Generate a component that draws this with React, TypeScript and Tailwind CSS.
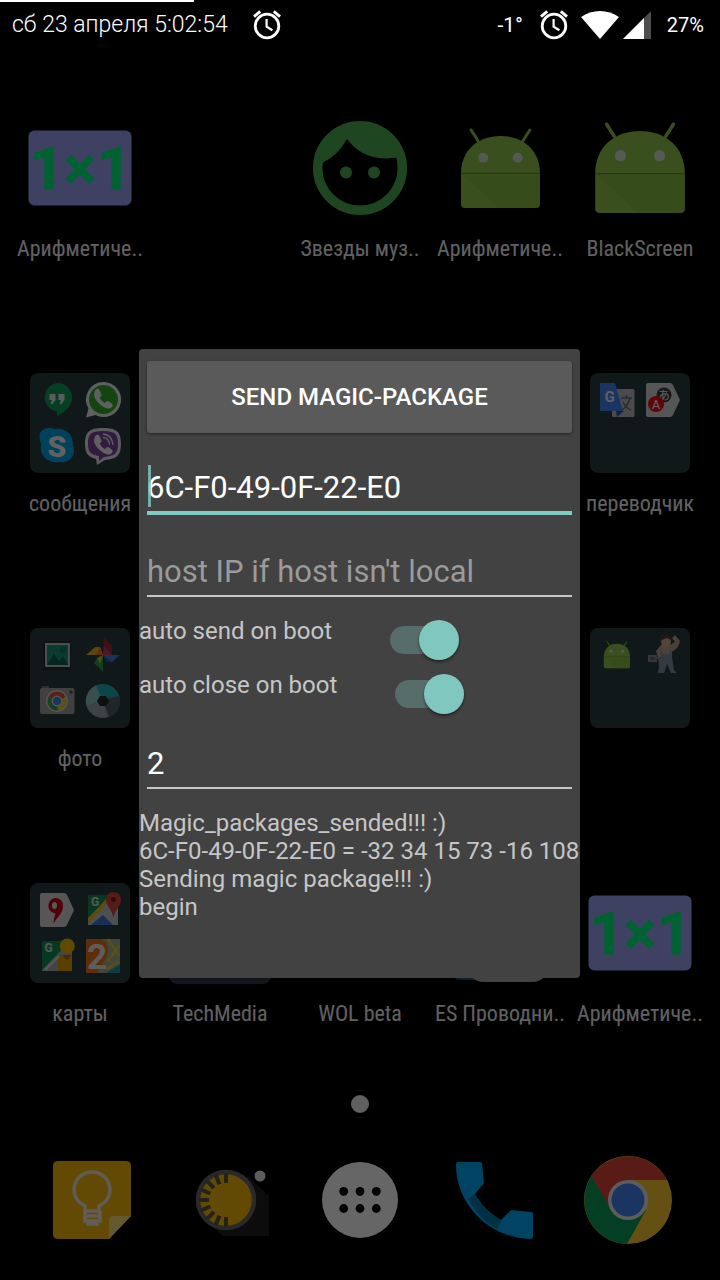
import type { ReactNode } from 'react';

const labelFont = "font-['Roboto_Condensed','Roboto',sans-serif]";

function AlarmIcon() {
  return (
    <svg viewBox="0 0 30 30" className="size-[30px] shrink-0" fill="none" stroke="#fff" aria-hidden="true">
      <circle cx="15" cy="16" r="11.8" strokeWidth="2.8" />
      <path d="M14.6 9v7.6l5.8 3.6" strokeWidth="2.2" />
      <path d="M2 6.6 8.2 1.4M28 6.6 21.8 1.4" strokeWidth="3" />
    </svg>
  );
}

function StatusBar() {
  return (
    <header className="relative z-20 flex h-[50px] items-center justify-between pr-4 pl-3 text-white">
      <div className="absolute top-0 left-0 h-[2px] w-[27%] bg-white" />
      <div className="flex items-center gap-6">
        <time className="text-[23px] leading-[30px] font-light">сб 23 апреля 5:02:54</time>
        <AlarmIcon />
      </div>
      <div className="flex items-center text-[21px] leading-[30px]">
        <span className="mr-4">-1°</span>
        <AlarmIcon />
        <svg viewBox="0 0 38 28" className="ml-3 h-7 w-[38px]" aria-hidden="true">
          <path d="M0 6C11-2 27-2 38 6L19 28Z" fill="#fff" />
        </svg>
        <svg viewBox="0 0 28 28" className="ml-1 size-7" aria-hidden="true">
          <path d="M28 0v28H0Z" fill="#4d4d4d" />
          <path d="M21 7v21H0Z" fill="#fff" />
        </svg>
        <span className="ml-4 text-[20px]">27%</span>
      </div>
    </header>
  );
}

function TimesTableIcon() {
  return (
    <svg viewBox="0 0 104 76" className="h-[76px] w-[104px]" aria-hidden="true">
      <rect x=".5" y=".5" width="103" height="75" rx="6" fill="#9ca4f5" />
      <g textAnchor="middle" fontFamily="Roboto, sans-serif" fontWeight="700" fontSize="60" fill="#00f580" stroke="#00f580" strokeWidth="1">
        <text x="19" y="58.500">1</text>
        <text x="52" y="58.500">×</text>
        <text x="86" y="58.500">1</text>
      </g>
    </svg>
  );
}

function FaceIcon() {
  return (
    <svg viewBox="0 0 94 94" className="size-[94px]" aria-hidden="true">
      <circle cx="47" cy="47" r="42.3" fill="none" stroke="#4cb050" strokeWidth="9.4" />
      <path d="M6 43C18 39 28 29 34 18c10 14 27 23 53 18L84 22 66 6 47 1 25 6 9 22Z" fill="#4cb050" />
      <circle cx="33" cy="51.5" r="6" fill="#4cb050" />
      <circle cx="61" cy="51.5" r="6" fill="#4cb050" />
    </svg>
  );
}

function AndroidShape() {
  return (
    <>
      <path d="m11 2 8 13M69 2l-8 13" stroke="#8bc34a" strokeWidth="3" strokeLinecap="round" />
      <path d="M1 46C1 22 18 8 40 8s39 14 39 38v31q0 4-4 4H5q-4 0-4-4Z" fill="#8ec549" />
      <path d="M3 47h76v30q0 4-4 4H38Z" fill="#82b742" opacity=".6" />
      <path d="M1 46h78" stroke="#65902f" strokeWidth="1.2" />
      <circle cx="23" cy="30" r="5" fill="#d8dbd5" />
      <circle cx="57" cy="30" r="5" fill="#d8dbd5" />
    </>
  );
}

function AndroidIcon({ large = false }: { large?: boolean }) {
  return (
    <svg viewBox="0 0 80 82" className={large ? 'h-[92px] w-[92px]' : 'h-[81px] w-[81px]'} preserveAspectRatio="none" aria-hidden="true">
      <AndroidShape />
    </svg>
  );
}

function Folder({ children }: { children: ReactNode }) {
  return (
    <svg viewBox="0 0 100 100" className="size-[100px] rounded-lg bg-[#2c3d42]" aria-hidden="true">
      {children}
    </svg>
  );
}

const handset = 'M-7-8.500q3-3.500 5 .5l1.500 3.500q.5 1.500-2 3Q-.5 2.500 3 4.200 5 1 7 2.500l3 2.200q2 2-1.500 4.500Q4 11-3 4.500T-7-8.500Z';

function MessagesArt() {
  return (
    <Folder>
      <path d="M27 10a15 14.500 0 0 1 15 14.500C42 34 33 40 27 43v-4.500A15 14.500 0 0 1 27 10Z" fill="#11a05b" />
      <path d="M19.500 21h6v6l-3 4h-2l1.500-4h-2.500ZM28.500 21h6v6l-3 4h-2l1.500-4h-2.500Z" fill="#e5e5e5" />
      <path d="M73.500 9a17.500 17.500 0 1 1-8 33L56 44.500l2.500-9A17.500 17.500 0 0 1 73.500 9Z" fill="#eee" />
      <circle cx="73.500" cy="26.500" r="14.500" fill="#32ac2b" />
      <path d={handset} transform="translate(72 26)" fill="#eee" />
      <path d="M10 60c4-6 11-6 14-4 12-2 20 6 19 17 4 8-3 18-14 16-11 2-20-7-18-18-1-3-2-7-1-11Z" fill="#00a5e5" />
      <text x="27" y="84" textAnchor="middle" fontFamily="Roboto, sans-serif" fontWeight="900" fontSize="30" fill="#f2f2f2">S</text>
      <path d="M73 55c14 0 18 4 18 16s-5 15-16 16l-8 5-1-6c-8-2-11-6-11-15 0-12 4-16 18-16Z" fill="#e5e0ea" />
      <path d="M73 58c12 0 15 3 15 13s-4 12-14 13l-5 4v-5c-8-1-11-4-11-12 0-10 3-13 15-13Z" fill="#7b479f" />
      <path d={handset} transform="translate(72 72)" fill="#f2f2f2" />
      <path d="M73 61q9 1 10 11M73 64.500q6 .5 6.500 7" fill="none" stroke="#f2f2f2" strokeWidth="1.300" />
    </Folder>
  );
}

function TranslateArt() {
  return (
    <Folder>
      <rect x="22" y="16" width="22.500" height="28" rx="1.500" fill="#bbb" />
      <path d="M31 25h11M36.500 22v3M40 25q-2 8-8 12M33 29q3 6 8 8" fill="none" stroke="#65717a" strokeWidth="1.500" />
      <path d="M11 10h14l8 28H11q-1 0-1-1V11q0-1 1-1Z" fill="#4285f4" />
      <path d="M26 38h8l-7 6Z" fill="#3052a8" />
      <text x="19.500" y="29" textAnchor="middle" fontFamily="Roboto, sans-serif" fontWeight="700" fontSize="15" fill="#eee">G</text>
      <path d="M58 10h22q2 0 3 2l7 15-7 15q-1 2-3 2H58q-2 0-2-2V12q0-2 2-2Z" fill="#d8d8d8" />
      <circle cx="74" cy="22" r="7.500" fill="#3a3a3a" />
      <text x="74" y="27" textAnchor="middle" fontFamily="'Noto Sans CJK JP', sans-serif" fontSize="12" fill="#eee">あ</text>
      <circle cx="66" cy="31" r="8" fill="#f01010" />
      <text x="66" y="35.500" textAnchor="middle" fontFamily="Roboto, sans-serif" fontSize="12.500" fill="#fff">A</text>
    </Folder>
  );
}

function PhotosArt() {
  return (
    <Folder>
      <rect x="13" y="13" width="28" height="29" fill="#232d2d" />
      <rect x="16" y="16" width="23" height="22" fill="#1c9180" stroke="#c9d0cf" strokeWidth="1.800" />
      <circle cx="33" cy="22" r="3" fill="#147568" />
      <path d="m17 37 7-11 5 7 4-5 5 9Z" fill="#115a50" />
      <path d="m73 27 1-17 8 8v9Z" fill="#a42b38" />
      <path d="M73 27h17l-8 7h-5Z" fill="#4a79dd" />
      <path d="M73 27v17l-9-9 3-5Z" fill="#2d9a4b" />
      <path d="M73 27H56l9-8h5Z" fill="#e3ae23" />
      <path d="m73 27 1-9 8 9Z" fill="#c93a5c" />
      <path d="m73 27 4 7h5Z" fill="#3158b5" />
      <path d="m73 27-6 3 3 6Z" fill="#b3c83c" />
      <path d="m73 27-3-8-4 8Z" fill="#e5762d" />
      <rect x="12" y="58" width="7" height="4" fill="#777" />
      <rect x="10" y="60" width="34.500" height="26" rx="2" fill="#a4a0a0" />
      <circle cx="41" cy="64" r="1.800" fill="#555" />
      <circle cx="27" cy="73" r="11" fill="#d0d0d0" />
      <path d="M27 73 18.500 69A9.500 9.500 0 0 1 35.500 69Z" fill="#e34c3e" />
      <path d="M27 73 35.500 69A9.500 9.500 0 0 1 28 82.500Z" fill="#f4c22a" />
      <path d="M27 73 28 82.500A9.500 9.500 0 0 1 18.500 69Z" fill="#3ba45a" />
      <circle cx="27" cy="73" r="4.800" fill="#4a87e8" stroke="#ddd" strokeWidth="1.200" />
      <circle cx="73" cy="73" r="17" fill="#607d80" />
      <path d="M73 73 62 60A17 17 0 0 1 89 68L77 69Z" fill="#16b5ba" />
      <path d="M73 73 56.500 78A17 17 0 0 1 66 57.500Z" fill="#8cc2c6" />
      <path d="M73 73 78 89A17 17 0 0 1 56.500 78Z" fill="#9aa5a7" />
      <path d="M73 73 89.500 68A17 17 0 0 1 80 88.500Z" fill="#4e5f64" />
      <path d="m70 68 6 0 3 5-3 5h-6l-3-5Z" fill="#20282b" />
    </Folder>
  );
}

function ToolsArt() {
  return (
    <Folder>
      <g transform="translate(13.500 13) scale(.335)">
        <AndroidShape />
      </g>
      <path d="M68 29h14l2 13 3 3h-6l-4-9-3 9h-6l1-6Z" fill="#8195a3" />
      <path d="m66 23 5-6h9l5-3-3-4 3-3 5 6-2 6-6 5v5H68Z" fill="#bba28e" />
      <circle cx="76" cy="14" r="5" fill="#d1a98e" />
      <path d="M69 12q1-6 7-5 5 0 5 5l-4-2-5 2Z" fill="#5e3e32" />
      <path d="m70 20 1 10h11l-1-10-2 6h-6Z" fill="#8195a3" />
      <path d="M59 28h7v5h-7ZM66 30h12" stroke="#8b8b94" strokeWidth="2" fill="#6a6670" />
    </Folder>
  );
}

function MapsArt() {
  return (
    <Folder>
      <path d="M12 10h22q2 0 3 2l7 15-7 15q-1 2-3 2H12q-2 0-2-2V12q0-2 2-2Z" fill="#d8d8d8" />
      <path d="M25 15a7.500 7.500 0 0 1 8 8.500C32.500 31 27 34 23.500 41c0-4 1-7 2-10.500A7.800 7.800 0 0 1 25 15Z" fill="#c90013" />
      <ellipse cx="24.500" cy="22.500" rx="2.500" ry="3.500" fill="#ddd" />
      <rect x="58" y="12" width="30" height="30" rx="1.500" fill="#138f53" />
      <path d="m58 38 25-26h5v30H58Z" fill="#c2c5c7" />
      <path d="m58 35 22-23h5L58 41Z" fill="#e6bd25" />
      <path d="m61 42 12-10 10 10Z" fill="#3f75d8" />
      <text x="65" y="23" textAnchor="middle" fontFamily="Roboto, sans-serif" fontWeight="700" fontSize="12" fill="#ddd">G</text>
      <path d="M83.500 9a7.500 7.500 0 0 1 7.500 8c0 6-6 9-7.500 18C82 26 76 23 76 17a7.500 7.500 0 0 1 7.500-8Z" fill="#d7483b" />
      <circle cx="83.500" cy="16.500" r="2.500" fill="#701d1b" />
      <rect x="12" y="58" width="30" height="30" rx="1.500" fill="#138f53" />
      <path d="m12 87 28-29h2v30H12Z" fill="#a9aba9" />
      <path d="M28 72h14v16H28Z" fill="#e0a000" />
      <path d="m32 72 5 6 5-6Z" fill="#c26a16" />
      <path d="m15 87 14-14" stroke="#ddd" strokeWidth="2" />
      <circle cx="37.300" cy="63" r="7.500" fill="#edb900" />
      <text x="18.500" y="69" textAnchor="middle" fontFamily="Roboto, sans-serif" fontWeight="700" fontSize="12" fill="#ddd">G</text>
      <rect x="56" y="56" width="34" height="34" fill="#abb08e" />
      <path d="M56 56h16q8 5 5 15-2 8-10 19H56Z" fill="#ea7414" />
      <path d="m78 56 11 17M89 63 78 78M76 86l13-7" stroke="#d6c94c" strokeWidth="2.500" />
      <path d="M76 90 90 81v9Z" fill="#1a9ba5" />
      <text x="67" y="86" textAnchor="middle" fontFamily="Roboto, sans-serif" fontWeight="700" fontSize="35" fill="#e9e9e9">2</text>
    </Folder>
  );
}

function ExplorerIcon() {
  return (
    <svg viewBox="0 0 104 98" className="h-[98px] w-[104px]" aria-hidden="true">
      <rect x="4" y="14" width="82" height="82" rx="8" fill="#1c4a80" />
      <rect x="18" y="22" width="84" height="76" rx="18" fill="#a8a8a8" />
    </svg>
  );
}

function WolIcon() {
  return (
    <svg viewBox="0 0 80 80" className="size-20" aria-hidden="true">
      <AndroidShape />
    </svg>
  );
}

type App = { name?: string; art?: ReactNode };

const apps: App[] = [
  { name: 'Арифметиче..', art: <TimesTableIcon /> },
  {},
  { name: 'Звезды муз..', art: <FaceIcon /> },
  { name: 'Арифметиче..', art: <AndroidIcon /> },
  { name: 'BlackScreen', art: <AndroidIcon large /> },
  { name: 'сообщения', art: <MessagesArt /> },
  {},
  {},
  {},
  { name: 'переводчик', art: <TranslateArt /> },
  { name: 'фото', art: <PhotosArt /> },
  {},
  {},
  {},
  { art: <ToolsArt /> },
  { name: 'карты', art: <MapsArt /> },
  { name: 'TechMedia', art: <div className="size-[102px] rounded-lg bg-[#2c3a46]" /> },
  { name: 'WOL beta', art: <WolIcon /> },
  { name: 'ES Проводни..', art: <ExplorerIcon /> },
  { name: 'Арифметиче..', art: <TimesTableIcon /> },
];

function HomeGrid() {
  return (
    <main className="mt-[66px] grid grid-cols-5 gap-y-[108px] px-[10px]">
      {apps.map((app, i) => (
        <div key={i} className="flex h-[147px] flex-col items-center justify-between">
          <div className="flex h-[104px] items-center justify-center">{app.art}</div>
          <span className={`${labelFont} h-7 text-[22px] leading-7 whitespace-nowrap text-[#f2f2f2]`}>{app.name}</span>
        </div>
      ))}
    </main>
  );
}

function KeepIcon() {
  return (
    <svg viewBox="0 0 78 78" className="size-[78px]" aria-hidden="true">
      <path d="M5 0h68q5 0 5 5v50L56 78H5q-5 0-5-5V5q0-5 5-5Z" fill="#f6b90c" />
      <path d="M56 78V59q0-4 4-4h18Z" fill="#f9dc7a" />
      <path d="M32 50v-5C24 41 21 36 21 29a18 18 0 0 1 36 0c0 7-3 12-11 16v5Z" fill="none" stroke="#eee9d7" strokeWidth="3.500" />
      <path d="M32 50v10h3v3h9v-3h3V50M32 55h15M33 60h13" fill="none" stroke="#eee9d7" strokeWidth="3.500" />
    </svg>
  );
}

const ticks = [0, 22.5, 45, 67.5, 90, 112.5, 135, 157.5, 180];

function DialIcon() {
  return (
    <svg viewBox="0 0 88 76" className="h-[76px] w-[88px]" aria-hidden="true">
      <path d="M66 14 87 34v40H41L21 56Z" fill="#1f1f1f" />
      <circle cx="44" cy="38" r="28" fill="#f6b90c" stroke="#666668" strokeWidth="4.500" />
      {ticks.map((a) => (
        <path key={a} d="M44 11v10" stroke="#5c5648" strokeWidth="4" transform={`rotate(${-a} 44 38)`} />
      ))}
      <circle cx="78" cy="14" r="5.500" fill="#e5e5e5" />
    </svg>
  );
}

function AppsIcon() {
  return (
    <svg viewBox="0 0 76 76" className="size-[76px]" aria-hidden="true">
      <circle cx="38" cy="38" r="38" fill="#fff" />
      {[21.7, 38, 54.3].map((x) => (
        <g key={x} fill="#000">
          <circle cx={x} cy="29.300" r="4.400" />
          <circle cx={x} cy="46.500" r="4.400" />
        </g>
      ))}
    </svg>
  );
}

function PhoneIcon() {
  return (
    <svg viewBox="0 0 77 77" className="size-[77px]" aria-hidden="true">
      <path d="M2 0h22q2 0 2 2l2 19-9 11C25 43 34 52 45 58l10-10 20 2q2 0 2 2v22q0 3-3 3C34 76 0 43 0 3q0-3 2-3Z" fill="#03a9f4" />
      <path d="m19 32-7 5C19 50 29 60 41 67l4-9C34 52 25 43 19 32Z" fill="#0278ad" />
    </svg>
  );
}

function ChromeIcon() {
  return (
    <svg viewBox="0 0 88 88" className="size-[88px]" aria-hidden="true">
      <circle cx="44" cy="44" r="44" fill="#fbc931" />
      <path d="M7.500 20A44 44 0 0 1 83 24H44L26 54Z" fill="#db4437" />
      <path d="M7.500 20A44 44 0 0 0 43 88L62 54 27 54Z" fill="#0b9d58" />
      <circle cx="44" cy="44" r="20" fill="#e8e8e8" />
      <circle cx="44" cy="44" r="16.500" fill="#4285f4" />
    </svg>
  );
}

const dock = [
  { name: 'Keep', art: <KeepIcon /> },
  { name: 'Clock', art: <DialIcon /> },
  { name: 'All apps', art: <AppsIcon /> },
  { name: 'Phone', art: <PhoneIcon /> },
  { name: 'Chrome', art: <ChromeIcon /> },
];

function Dock() {
  return (
    <nav className="mt-[43px] grid grid-cols-5 px-[25px]">
      {dock.map((item) => (
        <button key={item.name} type="button" aria-label={item.name} className="flex h-[88px] items-center justify-center">
          {item.art}
        </button>
      ))}
    </nav>
  );
}

function SwitchRow({ id, label }: { id: string; label: string }) {
  return (
    <div className="flex h-[54px] items-start gap-[58px]">
      <label htmlFor={id} className="text-2xl leading-7">{label}</label>
      <input
        id={id}
        type="checkbox"
        role="switch"
        defaultChecked
        className="relative mt-[3px] h-10 w-[69px] appearance-none before:absolute before:inset-x-0 before:top-[6px] before:h-7 before:rounded-full before:bg-[#566d6a] after:absolute after:top-0 after:right-0 after:size-10 after:rounded-full after:bg-[#80c8bf] after:shadow-[0_2px_3px_rgba(0,0,0,0.45)]"
      />
    </div>
  );
}

const log = ['Magic_packages_sended!!! :)', '6C-F0-49-0F-22-E0 = -32 34 15 73 -16 108', 'Sending magic package!!! :)', 'begin'];

function WakeDialog() {
  return (
    <section role="dialog" aria-label="WOL beta" className="w-[441px] max-w-full rounded-[4px] bg-[#424242] pt-3 pb-[57px] text-[#c6c6c6]">
      <div className="flex flex-col px-2">
        <button type="button" className="h-[72px] rounded-[3px] bg-[#5a5a5a] text-2xl font-medium text-white shadow-[0_1px_3px_rgba(0,0,0,0.5)]">
          SEND MAGIC-PACKAGE
        </button>
        <div className="relative mt-7">
          <input aria-label="MAC address" defaultValue="6C-F0-49-0F-22-E0" className="block h-[54px] w-full border-b-4 border-[#80cbc4] bg-transparent pt-1 text-[31px] text-white outline-none" />
          <span className="absolute top-1 left-px h-[42px] w-[3px] bg-[#80cbc4]/80" />
        </div>
        <input aria-label="Host IP" placeholder="host IP if host isn't local" className="mt-[30px] block h-[52px] w-full border-b-2 border-[#c6c6c6] bg-transparent pt-1 text-[31px] text-white outline-none placeholder:text-[#9b9b9b]" />
      </div>
      <div className="mt-5 flex flex-col">
        <SwitchRow id="auto-send" label="auto send on boot" />
        <SwitchRow id="auto-close" label="auto close on boot" />
      </div>
      <div className="px-2 pt-3">
        <input aria-label="Package count" defaultValue="2" className="block h-[52px] w-full border-b-2 border-[#c6c6c6] bg-transparent pt-1 text-[31px] text-white outline-none" />
      </div>
      <div className="mt-5 text-2xl leading-7 whitespace-nowrap">
        {log.map((line) => (
          <p key={line}>{line}</p>
        ))}
      </div>
    </section>
  );
}

export default function App() {
  return (
    <div className="relative flex min-h-screen flex-col bg-black font-['Roboto',sans-serif]">
      <StatusBar />
      <HomeGrid />
      <div className="mx-auto mt-[67px] size-[18px] rounded-full bg-[#f0f0f0]" />
      <Dock />
      <div className="absolute inset-0 z-10 flex items-center justify-center bg-black/60 pt-[46px] pr-px">
        <WakeDialog />
      </div>
    </div>
  );
}
